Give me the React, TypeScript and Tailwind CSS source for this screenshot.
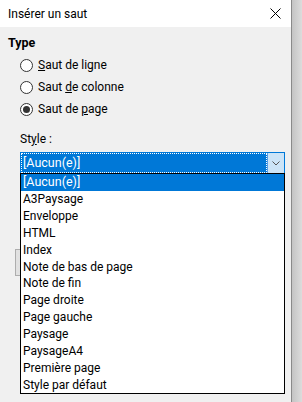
import React from 'react';

const STYLES = [
  '[Aucun(e)]',
  'A3Paysage',
  'Enveloppe',
  'HTML',
  'Index',
  'Note de bas de page',
  'Note de fin',
  'Page droite',
  'Page gauche',
  'Paysage',
  'PaysageA4',
  'Première page',
  'Style par défaut',
];

function Radio({ checked, children }: { checked?: boolean; children: React.ReactNode }) {
  return (
    <div className="flex h-[22px] items-center gap-[5px]">
      <span className="flex h-[13px] w-[13px] items-center justify-center rounded-full border border-[#333] bg-white">
        {checked && <span className="h-[7px] w-[7px] rounded-full bg-[#333]" />}
      </span>
      <span>{children}</span>
    </div>
  );
}

export default function App() {
  return (
    <div
      className="flex h-[402px] w-[302px] overflow-hidden text-[12px] text-black"
      style={{ fontFamily: 'Roboto, "Noto Sans", sans-serif' }}
    >
      <div className="relative flex w-[292px] flex-col border-r border-[#8a8a8a] bg-[#f0f0f0]">
        <div className="flex h-[27px] shrink-0 items-center justify-between bg-white pl-[8px] pr-[10px]">
          <span>Insérer un saut</span>
          <svg width="11" height="11" viewBox="0 0 11 11" className="text-black">
            <path d="M0.5 0.5 L10.5 10.5 M10.5 0.5 L0.5 10.5" stroke="currentColor" strokeWidth="1" />
          </svg>
        </div>

        <div className="flex flex-col px-[8px] pt-[7px]">
          <div className="text-[12.5px] font-bold leading-[18px]">Type</div>
          <div className="flex flex-col pl-[12px] pt-[2px]">
            <Radio>
              <span className="underline">S</span>aut de ligne
            </Radio>
            <Radio>
              Saut <span className="underline">d</span>e colonne
            </Radio>
            <Radio checked>
              Saut de <span className="underline">p</span>age
            </Radio>
          </div>

          <div className="pl-[12px] pt-[10px]">
            <div className="leading-[18px]">
              St<span className="underline">y</span>le :
            </div>
            <div className="mt-[4px] flex h-[22px] w-[265px] border border-[#0078d7] bg-white">
              <div className="flex flex-1 items-center bg-[#0078d7] pl-[2px] text-[12.5px] text-white outline outline-1 -outline-offset-1 outline-dotted outline-white">
                [Aucun(e)]
              </div>
              <div className="flex w-[17px] items-center justify-center border-l border-[#569de5] bg-[#cce4f7]">
                <svg width="8" height="5" viewBox="0 0 8 5">
                  <path d="M0.5 0.5 L4 4 L7.5 0.5" fill="none" stroke="#555" strokeWidth="1" />
                </svg>
              </div>
            </div>
          </div>

          <div className="ml-[7px] mt-[75px] h-[27px] w-[80px] border border-[#adadad] bg-[#e1e1e1]" />
        </div>

        <div className="absolute left-[20px] top-[173px] w-[265px] border border-black bg-white">
          {STYLES.map((s, i) => (
            <div
              key={s}
              className={`flex h-[16.85px] items-center pl-[2px] ${
                i === 0 ? 'bg-[#0078d7] text-[12.5px] text-white' : ''
              }`}
            >
              {s}
            </div>
          ))}
        </div>
      </div>
      <div className="w-[10px] bg-gradient-to-r from-[#c4c4c4] to-[#dcdcdc]" />
    </div>
  );
}
